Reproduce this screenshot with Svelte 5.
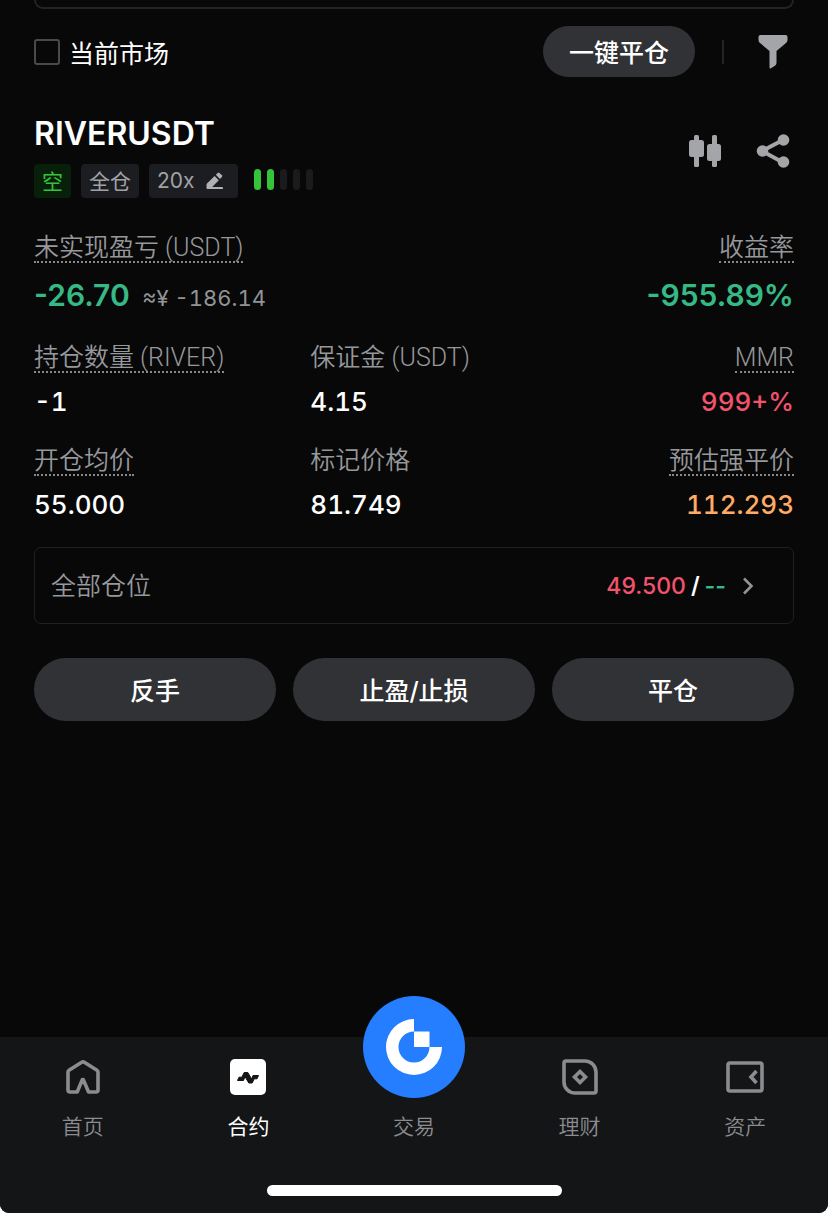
<script>
    let onlyCurrent = $state(false);
    let activeTab = $state('合约');

    const riskLevel = 2;
    const riskBars = [1, 2, 3, 4, 5];

    const stats = [
        { label: '持仓数量 (RIVER)', value: '-1', hint: true },
        { label: '保证金 (USDT)', value: '4.15' },
        { label: 'MMR', value: '999+%', hint: true, tone: 'red' },
        { label: '开仓均价', value: '55.000', hint: true },
        { label: '标记价格', value: '81.749' },
        { label: '预估强平价', value: '112.293', hint: true, tone: 'orange' }
    ];

    const actions = ['反手', '止盈/止损', '平仓'];
    const tabs = ['首页', '合约', '交易', '理财', '资产'];
</script>

<div class="page">
    <main>
        <div class="previous"></div>

        <div class="toolbar">
            <label class="current">
                <input type="checkbox" bind:checked={onlyCurrent} />
                当前市场
            </label>
            <button class="close-all">一键平仓</button>
            <span class="divider"></span>
            <button class="icon" aria-label="筛选">
                <svg width="30" height="34" viewBox="0 0 30 34">
                    <path d="M2.500 0h25a2 2 0 0 1 2 2v3a4 4 0 0 1-1.500 3L18.500 16v12a3 3 0 0 1-1.200 2.400L13 33.200a1 1 0 0 1-1.500-.8V16L2 8A4 4 0 0 1 .5 5V2a2 2 0 0 1 2-2z" fill="#a4a5a9" />
                </svg>
            </button>
        </div>

        <section class="position">
            <header>
                <div>
                    <h1>RIVERUSDT</h1>
                    <div class="tags">
                        <span class="tag short">空</span>
                        <span class="tag">全仓</span>
                        <button class="tag leverage">
                            20x
                            <svg width="18" height="18" viewBox="0 0 18 18" fill="#b0b1b5">
                                <path d="M1 11.500 8.600 4l4.200 4.200L6.200 15H16a1 1 0 0 1 1 1v1H1.500a1 1 0 0 1-1-1v-3a2 2 0 0 1 .5-1.500z" />
                                <path d="M9.800 2.800 11.700.9a1.300 1.300 0 0 1 1.800 0l2.400 2.400a1.300 1.300 0 0 1 0 1.800L14 7z" />
                            </svg>
                        </button>
                        <span class="risk">
                            {#each riskBars as bar}
                                <i class:on={bar <= riskLevel}></i>
                            {/each}
                        </span>
                    </div>
                </div>
                <div class="tools">
                    <button class="icon" aria-label="K线">
                        <svg width="34" height="34" viewBox="0 0 34 34" fill="#a4a5a9">
                            <rect x="6" y="1" width="5" height="32" rx="1.500" />
                            <rect x="1" y="6" width="15" height="17" rx="2.500" />
                            <rect x="24" y="1" width="5" height="32" rx="1.500" />
                            <rect x="19" y="10" width="14" height="17" rx="2.500" />
                        </svg>
                    </button>
                    <button class="icon" aria-label="分享">
                        <svg width="34" height="34" viewBox="0 0 34 34" fill="#a4a5a9">
                            <path d="M27 6 6 17l21 11.500" fill="none" stroke="#a4a5a9" stroke-width="4" />
                            <circle cx="6.500" cy="17" r="5.800" />
                            <circle cx="27.500" cy="6" r="5.800" />
                            <circle cx="27.500" cy="28" r="5.800" />
                        </svg>
                    </button>
                </div>
            </header>

            <dl class="summary">
                <div>
                    <dt><span class="hint">未实现盈亏 (USDT)</span></dt>
                    <dd>-26.70 <small>≈¥ -186.14</small></dd>
                </div>
                <div>
                    <dt><span class="hint">收益率</span></dt>
                    <dd>-955.89%</dd>
                </div>
            </dl>

            <dl class="stats">
                {#each stats as stat}
                    <div>
                        <dt><span class:hint={stat.hint}>{stat.label}</span></dt>
                        <dd class={stat.tone}>{stat.value}</dd>
                    </div>
                {/each}
            </dl>

            <button class="all">
                <span class="name">全部仓位</span>
                <span class="targets">
                    <span class="red">49.500</span>
                    <b>/</b>
                    <b class="green">--</b>
                </span>
                <svg width="12" height="18" viewBox="0 0 12 18">
                    <path d="M2 1.500 9.500 9 2 16.500" fill="none" stroke="#929397" stroke-width="2.600" />
                </svg>
            </button>

            <div class="actions">
                {#each actions as action}
                    <button>{action}</button>
                {/each}
            </div>
        </section>
    </main>

    <nav>
        <div class="tabs">
            {#each tabs as tab, i}
                <button class:active={activeTab === tab} onclick={() => (activeTab = tab)}>
                    <span class="symbol">
                        {#if i === 0}
                            <svg width="36" height="36" viewBox="0 0 36 36" fill="none" stroke="#8b8c8f" stroke-width="3.600" stroke-linejoin="round">
                                <path d="M16.300 3.400 4 11.200a2 2 0 0 0-1 1.800v18a2 2 0 0 0 2 2h7.200L17.400 20.500h.8L23.600 33H31a2 2 0 0 0 2-2V13a2 2 0 0 0-1-1.800L19.700 3.400a3.200 3.200 0 0 0-3.400 0z" />
                            </svg>
                        {:else if i === 1}
                            <svg width="36" height="36" viewBox="0 0 36 36">
                                <rect width="36" height="36" rx="5" fill="#fff" />
                                <path d="m7.500 21.500 1.500-3.300h2.800l2.400-4.700h3.600l3.800 6.500 1.400-3.500h5.500l-1.500 3.300h-2.800l-2 4.200h-3.400l-3.800-6.300-1.500 3.800z" fill="#141517" stroke="#141517" stroke-linejoin="round" />
                            </svg>
                        {:else if i === 2}
                            <span class="trade">
                                <svg width="56" height="56" viewBox="0 0 56 56" fill="#fff">
                                    <path d="M28 0v12.500a15.500 15.500 0 1 0 15.500 15.500H56A28 28 0 1 1 28 0z" />
                                    <path d="M28 12.500h15.500V28H28z" />
                                </svg>
                            </span>
                        {:else if i === 3}
                            <svg width="36" height="36" viewBox="0 0 36 36" fill="none" stroke="#8b8c8f" stroke-width="3.600">
                                <path d="M4 2h19a11 11 0 0 1 11 11v19a2 2 0 0 1-2 2H13A11 11 0 0 1 2 23V4a2 2 0 0 1 2-2z" />
                                <path d="m18 12.500 5.500 5.500-5.500 5.500-5.500-5.500z" />
                            </svg>
                        {:else}
                            <svg width="38" height="32" viewBox="0 0 38 32" fill="none" stroke="#8b8c8f" stroke-width="3.600">
                                <rect x="2" y="2" width="34" height="28" rx="2" />
                                <path d="m30.500 10-5.500 6 5.500 6" />
                            </svg>
                        {/if}
                    </span>
                    {tab}
                </button>
            {/each}
        </div>
        <div class="home-bar"></div>
    </nav>
</div>

<style>
    :global(body) {
        background: #fff;
    }

    .page {
        background: #080808;
        border-radius: 0 0 9px 9px;
        color: #fff;
        display: flex;
        flex-direction: column;
        font-family: Inter, "Noto Sans CJK SC", sans-serif;
        font-size: 25px;
        justify-content: space-between;
        min-height: 100vh;
        overflow: hidden;
    }

    main {
        padding: 0 34px;
    }

    button {
        background: none;
        border: 0;
        color: inherit;
        cursor: pointer;
        font: inherit;
        padding: 0;
    }

    svg {
        display: block;
    }

    .icon {
        display: flex;
        justify-content: center;
        width: 34px;
    }

    .previous {
        border: 2px solid #242426;
        border-radius: 0 0 14px 14px;
        border-top: 0;
        height: 7px;
    }

    .toolbar {
        align-items: center;
        display: flex;
        margin-top: 17px;
        padding-right: 4px;
    }

    .current {
        align-items: center;
        display: flex;
        flex: 1;
        gap: 9px;
    }

    .current input {
        appearance: none;
        border: 2px solid #4a4a4e;
        border-radius: 3px;
        height: 26px;
        margin: 0;
        width: 26px;
    }

    .current input:checked {
        background: #247eff;
    }

    .close-all {
        background: #313236;
        border-radius: 26px;
        font-weight: 500;
        height: 51px;
        padding: 0 26px 2px;
    }

    .divider {
        background: #242427;
        height: 24px;
        margin: 0 32px 0 27px;
        width: 2px;
    }

    header {
        display: flex;
        justify-content: space-between;
        margin-top: 36px;
    }

    h1 {
        font-size: 32px;
        font-weight: 600;
        line-height: 42px;
        margin: 0;
    }

    .tags {
        align-items: center;
        display: flex;
        gap: 10px;
        margin-top: 9px;
    }

    .tag {
        background: #1c1d21;
        border-radius: 4px;
        color: #a1a2a6;
        font-size: 21px;
        height: 34px;
        line-height: 36px;
        padding: 0 8px;
    }

    .short {
        background: #08200a;
        color: #36c13c;
    }

    .leverage {
        align-items: center;
        display: flex;
        gap: 11px;
        padding-right: 14px;
    }

    .risk {
        display: flex;
        gap: 6px;
        margin: 0 0 4px 6px;
    }

    .risk i {
        background: #1b1b1d;
        border-radius: 4px;
        height: 21px;
        width: 7px;
    }

    .risk .on {
        background: #35c33a;
    }

    .tools {
        align-items: flex-start;
        display: flex;
        gap: 34px;
        padding: 21px 4px 0 0;
    }

    dl {
        margin: 0;
    }

    dt {
        color: #97989b;
        font-family: Roboto, "Noto Sans CJK SC", sans-serif;
        font-weight: 350;
        line-height: 26px;
    }

    dt span {
        border-bottom: 2px solid transparent;
        display: inline-block;
        padding-top: 2px;
        vertical-align: top;
    }

    dt .hint {
        border-bottom: 2px dotted #88898c;
    }

    dd {
        line-height: 32px;
        margin: 0;
    }

    .summary {
        display: flex;
        justify-content: space-between;
        margin-top: 35px;
    }

    .summary dd {
        color: #36b985;
        font-size: 30px;
        font-weight: 600;
        margin-top: 16px;
    }

    .summary div:last-child {
        text-align: right;
    }

    small {
        color: #929397;
        font-size: 22px;
        font-variant-numeric: tabular-nums;
        font-weight: 400;
        margin-left: 5px;
    }

    .stats {
        display: grid;
        grid-template-columns: 4fr 4fr 3fr;
        margin-top: 29px;
        row-gap: 28px;
    }

    .stats div:nth-child(3n) {
        text-align: right;
    }

    .stats dd {
        font-size: 26px;
        font-variant-numeric: tabular-nums;
        font-weight: 500;
        margin-top: 13px;
    }

    .red {
        color: #f2536c;
    }

    .orange {
        color: #ffab66;
    }

    .all {
        align-items: center;
        border: 1px solid #202022;
        border-radius: 7px;
        color: #97989b;
        display: flex;
        height: 77px;
        margin-top: 26px;
        padding: 0 39px 0 16px;
        width: 100%;
    }

    .name {
        font-weight: 350;
        padding-bottom: 3px;
    }

    .targets {
        display: flex;
        flex: 1;
        font-size: 23px;
        font-weight: 500;
        gap: 5px;
        justify-content: flex-end;
        margin-right: 16px;
    }

    .targets b {
        color: #fff;
        font-weight: 600;
    }

    .targets .green {
        color: #36b985;
    }

    .actions {
        display: grid;
        gap: 17px;
        grid-template-columns: repeat(3, 1fr);
        margin-top: 34px;
    }

    .actions button {
        background: #313236;
        border-radius: 32px;
        font-weight: 500;
        height: 63px;
        padding-bottom: 2px;
    }

    nav {
        background: #141517;
        padding: 18px 0 17px;
    }

    .tabs {
        display: grid;
        grid-template-columns: repeat(5, 1fr);
    }

    .tabs button {
        align-items: center;
        color: #8b8c8f;
        display: flex;
        flex-direction: column;
        font-size: 21px;
        font-weight: 350;
        gap: 13px;
        line-height: 30px;
    }

    .tabs .active {
        color: #fff;
        font-weight: 400;
    }

    .symbol {
        align-items: center;
        display: flex;
        height: 44px;
        justify-content: center;
        position: relative;
    }

    .trade {
        align-items: center;
        background: #247eff;
        border-radius: 50%;
        bottom: 1px;
        display: flex;
        height: 102px;
        justify-content: center;
        position: absolute;
        width: 102px;
    }

    .home-bar {
        background: #fff;
        border-radius: 6px;
        height: 11px;
        margin: 43px auto 0;
        width: 295px;
    }
</style>
